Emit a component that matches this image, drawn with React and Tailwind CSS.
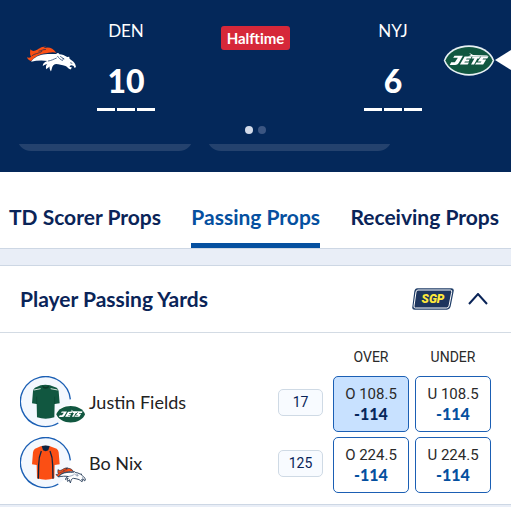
import React from "react";

function BroncosMark({ x, y, width, height, outline }) {
  return (
    <svg x={x} y={y} width={width} height={height} viewBox="0 0 148 76" aria-hidden="true" overflow="visible">
      <path
        d="M12 44 C7 43 2 39 0 33 C6 35 9 34 12 31 C8 25 9 17 10 9 C14 14 19 15 25 13 C35 9 38 2 57 1 C52 3 50 5 49 6 C62 1 76 3 87 20 C76 15 64 20 50 22 C36 25 22 32 12 44Z"
        fill="#fb4f14"
        stroke={outline}
        strokeWidth={outline === "none" ? 0 : 3}
      />
      <path
        d="M14 29 C22 21 34 23 45 15 M34 15 C42 14 48 9 56 10"
        fill="none"
        stroke="#04285a"
        strokeWidth="2"
      />
      <path
        d="M12 46 C20 34 36 25 54 24 C68 22 80 24 86 23 C91 18 94 20 96 24 C104 24 112 28 119 32 L125 31 L126 37 C134 43 141 48 143 54 L145 62 L141 65 L138 59 C132 55 128 56 126 61 L133 63 L129 69 C121 68 120 61 114 59 C104 56 94 53 86 53 C78 54 75 60 74 65 L71 75 C67 69 66 64 67 60 L57 68 C55 62 56 57 60 53 C52 54 50 58 47 59 C46 52 53 46 61 44 C46 41 28 42 12 46Z"
        fill="#ffffff"
        stroke={outline}
        strokeWidth={outline === "none" ? 0 : 4}
        strokeLinejoin="round"
      />
      <path
        d="M62 44 C72 43 80 38 88 35 M98 30 L110 38 L104 38 M90 29 C94 35 99 40 106 43 M128 49 L134 51"
        fill="none"
        stroke="#04285a"
        strokeWidth="2"
      />
    </svg>
  );
}

function JetsMark({ x, y, width, height, rim }) {
  return (
    <svg x={x} y={y} width={width} height={height} viewBox="0 0 152 92" aria-hidden="true">
      <path
        d="M1 46 C10 18 42 1 76 1 C110 1 142 18 151 46 C142 74 110 91 76 91 C42 91 10 74 1 46Z"
        fill={rim}
      />
      <path
        d="M6 46 C15 21 45 6 76 6 C107 6 137 21 146 46 C137 71 107 86 76 86 C45 86 15 71 6 46Z"
        fill="#115740"
      />
      <g fill="#ffffff">
        <path d="M33 32 H58 L45 54 Q42 59 35 59 H19 L23 51 H34 L43 38 H29Z" />
        <path d="M63 34 H84 L81 40 H69 L67 43 H78 L75 49 H64 L62 52 H76 L72 58 H49Z" />
        <path d="M87 34 H109 L106 40 H101 L91 58 H82 L92 40 H84Z" />
        <path d="M112 34 H134 L130 40 H118 L116 43 H127 L118 58 H94 L98 52 H111 L113 49 H102Z" />
        <path d="M76 23 L88 30 L130 31 L134 34 H73 L82 30Z" />
      </g>
    </svg>
  );
}

function ArcBackdrop() {
  return (
    <>
      <circle cx="76" cy="77" r="75" fill="#f4f8fe" />
      <path
        d="M151 70 A75 75 0 1 0 115 141"
        fill="none"
        stroke="#1b5fb4"
        strokeWidth="4"
      />
    </>
  );
}

const JERSEY =
  "M62 28 Q76 25 90 28 L110 35 Q115 38 116 46 L119 82 L104 84 L103 124 Q77 132 51 124 L50 84 L36 82 L39 46 Q40 38 45 35Z";

function JetsAvatar() {
  return (
    <svg className="block h-[52px] w-[66px] shrink-0" viewBox="0 0 198 156" aria-hidden="true">
      <ArcBackdrop />
      <path d={JERSEY} fill="#115740" />
      <path d="M66 28 Q77 38 88 28 L85 36 Q77 40 69 36Z" fill="#0a3a29" />
      <path d="M42 42 L62 38 M113 42 L92 38" stroke="#d5e6de" strokeWidth="3" />
      <path d="M50 62 V84 M104 62 V84" stroke="#0b4631" strokeWidth="2" />
      <JetsMark x="105" y="85" width="94" height="60" rim="#ffffff" />
    </svg>
  );
}

function BroncosAvatar() {
  return (
    <svg className="block h-[52px] w-[66px] shrink-0" viewBox="0 0 198 156" aria-hidden="true">
      <ArcBackdrop />
      <path d={JERSEY} fill="#fb4f14" />
      <path d="M65 27 Q77 24 89 27 L85 40 Q77 45 69 40Z" fill="#0a2343" />
      <path
        d="M64 42 Q56 60 56 84 L55 125 M90 42 Q98 60 98 84 L99 125"
        fill="none"
        stroke="#0a2343"
        strokeWidth="4"
      />
      <BroncosMark x="108" y="87" width="90" height="56" outline="#0a2343" />
    </svg>
  );
}

function TeamScore({ code, score }) {
  return (
    <div className="flex w-[58px] flex-col items-center">
      <div className="text-[17px] leading-5">{code}</div>
      <div className="mt-6 text-[32px] leading-8 font-black">{score}</div>
      <div className="mt-[11px] flex w-full gap-0.5">
        <span className="h-[3px] flex-1 bg-white" />
        <span className="h-[3px] flex-1 bg-white" />
        <span className="h-[3px] flex-1 bg-white" />
      </div>
    </div>
  );
}

function OddsButton({ line, price, tinted }) {
  return (
    <button
      type="button"
      className={
        "flex h-14 w-[76px] flex-col items-center justify-center rounded-[5px] border border-[#1b5fb4] text-[#2a2a2a] " +
        (tinted ? "bg-[#c8e1ff]" : "bg-white")
      }
    >
      <span className="font-['Roboto',sans-serif] text-[15px] leading-5 whitespace-nowrap">{line}</span>
      <span
        className={
          "text-base leading-5 font-black " + (tinted ? "text-[#06265a]" : "text-[#0550a0]")
        }
      >
        {price}
      </span>
    </button>
  );
}

const TABS = ["TD Scorer Props", "Passing Props", "Receiving Props"];

const PLAYERS = [
  { name: "Justin Fields", yards: "17", line: "108.5", Avatar: JetsAvatar, tinted: true },
  { name: "Bo Nix", yards: "125", line: "224.5", Avatar: BroncosAvatar, tinted: false },
];

export default function App() {
  return (
    <div className="min-h-screen overflow-x-hidden bg-[#e9eef7] font-['Lato',sans-serif]">
      <header className="bg-[#04285a] pt-[21px] pb-[21px] text-white">
        <div className="grid grid-cols-[1fr_auto_1fr] items-start">
          <div className="flex items-start gap-5 pl-[27px]">
            <svg className="mt-[25px] block h-[26px] w-[50px]" viewBox="0 0 148 76" role="img" aria-label="Denver">
              <BroncosMark width="148" height="76" outline="none" />
            </svg>
            <TeamScore code="DEN" score="10" />
          </div>
          <div className="mt-[5px] rounded-[3px] bg-[#d62839] px-[6px] text-[15px] leading-6 font-bold">
            Halftime
          </div>
          <div className="flex items-start justify-end">
            <TeamScore code="NYJ" score="6" />
            <svg className="mt-6 ml-[21px] block h-[31px] w-[52px]" viewBox="0 0 152 92" role="img" aria-label="New York">
              <JetsMark width="152" height="92" rim="#e8f0f4" />
            </svg>
            <svg className="mt-[29px] block h-5 w-4" viewBox="0 0 16 20" aria-hidden="true">
              <path d="M0 10 L16 0 V20Z" fill="#ffffff" />
            </svg>
          </div>
        </div>
        <div className="mt-[15px] flex justify-center gap-[5px]">
          <span className="size-2 rounded-full bg-[#d3dbea]" />
          <span className="size-2 rounded-full bg-[#3c5682]" />
        </div>
        <div className="mt-[10px] flex h-[7px] items-end gap-[14px] overflow-hidden pr-[119px] pl-[17px]">
          <span className="h-8 flex-[19] rounded-[14px] bg-[#24426e]" />
          <span className="h-8 flex-[20] rounded-[14px] bg-[#24426e]" />
        </div>
      </header>

      <nav className="flex h-[77px] items-end justify-between border-b border-[#cdd7e4] bg-white pr-3 pl-[9px]">
        {TABS.map((tab) => (
          <button
            key={tab}
            type="button"
            className={
              "border-b-[5px] pt-4 pb-[14px] text-[21px] leading-6 font-bold whitespace-nowrap " +
              (tab === "Passing Props"
                ? "border-[#0550a0] text-[#0550a0]"
                : "border-transparent text-[#0a2458]")
            }
          >
            {tab}
          </button>
        ))}
      </nav>

      <section className="mt-4 border-y border-[#cdd7e4] bg-white">
        <h2 className="border-b border-[#d3dbe4] text-[#0a2458]">
          <button type="button" className="flex h-[66px] w-full items-center pr-[23px] pl-5 text-left">
            <span className="flex-1 text-[21px] leading-6 font-bold">Player Passing Yards</span>
            <svg className="h-[22px] w-[42px]" viewBox="0 0 126 66">
              <path
                d="M16 1 H118 Q127 1 125 10 L116 55 Q113 65 105 65 H8 Q-1 65 1 56 L7 10 Q9 1 16 1Z"
                fill="#203e68"
              />
              <path
                d="M18 6 H115 Q121 6 119 13 L111 54 Q110 60 103 60 H10 Q5 60 6 54 L12 12 Q13 6 18 6Z"
                fill="#1d355e"
                stroke="#ffffff"
                strokeWidth="3"
              />
              <text
                x="63"
                y="46"
                textAnchor="middle"
                fill="#ffe93b"
                fontFamily="Roboto, sans-serif"
                fontSize="36"
                fontWeight="900"
                fontStyle="italic"
              >
                SGP
              </text>
            </svg>
            <svg className="ml-[14px] h-3 w-5" viewBox="0 0 20 12" aria-hidden="true">
              <path d="M1 11 L10 1 L19 11" fill="none" stroke="#0a2458" strokeWidth="2" />
            </svg>
          </button>
        </h2>
        <div className="px-5 pt-[14px] pb-[6px]">
          <table className="w-full">
            <thead>
              <tr className="font-['Roboto',sans-serif] text-sm leading-5 text-[#2a2a2a]">
                <th aria-label="Player" />
                <th aria-label="Yards" />
                <th scope="col" className="w-[86px] pb-[9px] pl-[10px] font-normal">OVER</th>
                <th scope="col" className="w-[82px] pb-[9px] pl-[6px] font-normal">UNDER</th>
              </tr>
            </thead>
            <tbody>
              {PLAYERS.map(({ name, yards, line, Avatar, tinted }) => (
                <tr key={name}>
                  <th scope="row" className="pb-[9px] text-left font-normal">
                    <div className="flex items-center gap-[3px] text-[18px] leading-6 text-[#222222]">
                      <Avatar />
                      <span>{name}</span>
                    </div>
                  </th>
                  <td className="w-[45px] pb-[9px]">
                    <div className="h-[27px] rounded-[5px] border border-[#cfdae5] bg-[#f8fbff] text-center font-['Roboto',sans-serif] text-sm leading-[25px] text-[#0a2458]">
                      {yards}
                    </div>
                  </td>
                  <td className="pb-[5px] pl-[10px]">
                    <OddsButton line={"O " + line} price="-114" tinted={tinted} />
                  </td>
                  <td className="pb-[5px] pl-[6px]">
                    <OddsButton line={"U " + line} price="-114" />
                  </td>
                </tr>
              ))}
            </tbody>
          </table>
        </div>
      </section>
    </div>
  );
}
